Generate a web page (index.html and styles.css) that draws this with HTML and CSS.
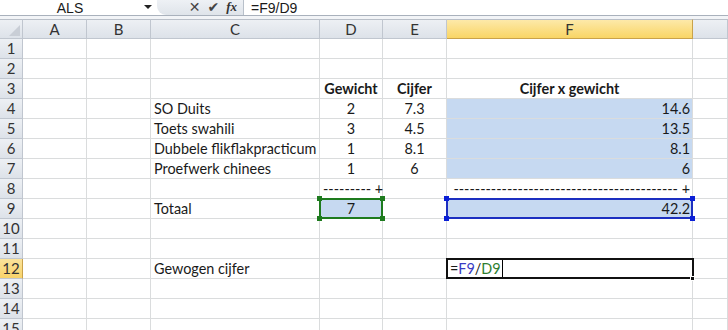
FILE: index.html
```html
<!DOCTYPE html>
<html lang="nl">
<head>
    <meta charset="UTF-8">
    <title>Gewogen cijfer</title>
    <link rel="stylesheet" href="styles.css">
</head>
<body>
    <div class="formula-bar">
        <div class="name-box">
            <span class="name">ALS</span>
            <span class="arrow"></span>
        </div>
        <div class="fx-buttons">
            <span class="btn cancel">&#x2715;</span>
            <span class="btn enter">&#x2714;</span>
            <span class="btn fx">fx</span>
        </div>
        <div class="formula-input">=F9/D9</div>
    </div>
    <div class="bar-gap"></div>

    <div class="sheet">
        <!-- kolomkoppen -->
        <div class="hdr corner"><span class="tri"></span></div>
        <div class="hdr">A</div>
        <div class="hdr">B</div>
        <div class="hdr">C</div>
        <div class="hdr">D</div>
        <div class="hdr">E</div>
        <div class="hdr active">F</div>
        <div class="hdr"></div>

        <!-- 1 -->
        <div class="rh">1</div><div class="c"></div><div class="c"></div><div class="c"></div><div class="c"></div><div class="c"></div><div class="c"></div><div class="c"></div>
        <!-- 2 -->
        <div class="rh">2</div><div class="c"></div><div class="c"></div><div class="c"></div><div class="c"></div><div class="c"></div><div class="c"></div><div class="c"></div>
        <!-- 3 -->
        <div class="rh">3</div><div class="c"></div><div class="c"></div><div class="c"></div>
        <div class="c center bold">Gewicht</div>
        <div class="c center bold">Cijfer</div>
        <div class="c center bold">Cijfer x gewicht</div>
        <div class="c"></div>
        <!-- 4 -->
        <div class="rh">4</div><div class="c"></div><div class="c"></div>
        <div class="c">SO Duits</div>
        <div class="c center">2</div>
        <div class="c center">7.3</div>
        <div class="c right sel">14.6</div>
        <div class="c"></div>
        <!-- 5 -->
        <div class="rh">5</div><div class="c"></div><div class="c"></div>
        <div class="c">Toets swahili</div>
        <div class="c center">3</div>
        <div class="c center">4.5</div>
        <div class="c right sel">13.5</div>
        <div class="c"></div>
        <!-- 6 -->
        <div class="rh">6</div><div class="c"></div><div class="c"></div>
        <div class="c">Dubbele flikflakpracticum</div>
        <div class="c center">1</div>
        <div class="c center">8.1</div>
        <div class="c right sel">8.1</div>
        <div class="c"></div>
        <!-- 7 -->
        <div class="rh">7</div><div class="c"></div><div class="c"></div>
        <div class="c">Proefwerk chinees</div>
        <div class="c center">1</div>
        <div class="c center">6</div>
        <div class="c right sel">6</div>
        <div class="c"></div>
        <!-- 8 -->
        <div class="rh">8</div><div class="c"></div><div class="c"></div><div class="c"></div>
        <div class="c right">--------- +</div>
        <div class="c"></div>
        <div class="c right">------------------------------------------ +</div>
        <div class="c"></div>
        <!-- 9 -->
        <div class="rh">9</div><div class="c"></div><div class="c"></div>
        <div class="c">Totaal</div>
        <div class="c center sel ref green">7<i class="h tl"></i><i class="h tr"></i><i class="h bl"></i><i class="h br"></i></div>
        <div class="c"></div>
        <div class="c right sel ref blue">42.2<i class="h tl"></i><i class="h tr"></i><i class="h bl"></i><i class="h br"></i></div>
        <div class="c"></div>
        <!-- 10 -->
        <div class="rh">10</div><div class="c"></div><div class="c"></div><div class="c"></div><div class="c"></div><div class="c"></div><div class="c"></div><div class="c"></div>
        <!-- 11 -->
        <div class="rh">11</div><div class="c"></div><div class="c"></div><div class="c"></div><div class="c"></div><div class="c"></div><div class="c"></div><div class="c"></div>
        <!-- 12 -->
        <div class="rh active">12</div><div class="c"></div><div class="c"></div>
        <div class="c">Gewogen cijfer</div>
        <div class="c"></div><div class="c"></div>
        <div class="c editing">=<span class="r-blue">F9</span>/<span class="r-green">D9</span><span class="caret"></span><i class="fill"></i></div>
        <div class="c"></div>
        <!-- 13 -->
        <div class="rh">13</div><div class="c"></div><div class="c"></div><div class="c"></div><div class="c"></div><div class="c"></div><div class="c"></div><div class="c"></div>
        <!-- 14 -->
        <div class="rh">14</div><div class="c"></div><div class="c"></div><div class="c"></div><div class="c"></div><div class="c"></div><div class="c"></div><div class="c"></div>
        <!-- 15 -->
        <div class="rh">15</div><div class="c"></div><div class="c"></div><div class="c"></div><div class="c"></div><div class="c"></div><div class="c"></div><div class="c"></div>
    </div>
</body>
</html>
```

FILE: styles.css
```css
:root {
    --grid-color: #dadcdd;
    --header-line: #c0c6cf;
    --sel-fill: #c6d9f1;
    --ref-blue: #1c2fc0;
    --ref-green: #1e7b1e;
    --text-color: #1a1a1a;
}

* {
    box-sizing: border-box;
    margin: 0;
    padding: 0;
}

body {
    width: 728px;
    height: 330px;
    overflow: hidden;
    background: #ffffff;
    font-family: 'Lato', 'Open Sans', sans-serif;
    font-size: 14.4px;
    color: var(--text-color);
}

/* formulebalk */
.formula-bar {
    height: 16px;
    display: flex;
    align-items: flex-start;
    border-bottom: 1px solid #a9b1bc;
    background: #ffffff;
    font-family: 'Liberation Sans', sans-serif;
    font-size: 14px;
    line-height: normal;
}

.name-box {
    width: 157px;
    height: 15px;
    display: flex;
    align-items: flex-start;
}

.name-box .name {
    width: 140px;
    text-align: center;
}

.name-box .arrow {
    width: 0;
    height: 0;
    margin-left: 4px;
    margin-top: 5px;
    border-left: 4px solid transparent;
    border-right: 4px solid transparent;
    border-top: 4px solid #222;
}

.fx-buttons {
    width: 87px;
    height: 15px;
    display: flex;
    align-items: flex-start;
    justify-content: flex-end;
    gap: 7px;
    padding-right: 6px;
    background: linear-gradient(#eef1f5, #dfe4ea);
    border-radius: 0 0 0 9px;
    border-right: 1px solid #b8c0ca;
}

.fx-buttons .btn {
    color: #444;
    font-family: 'DejaVu Sans', sans-serif;
    font-size: 14px;
    font-weight: bold;
    line-height: 14px;
}

.fx-buttons .fx {
    font-family: 'Liberation Serif', serif;
    font-style: italic;
    font-size: 13px;
    color: #333;
}

.formula-input {
    padding-left: 7px;
}

.bar-gap {
    height: 3px;
    background: #f2f4f7;
}

/* werkblad */
.sheet {
    display: grid;
    grid-template-columns: 23px 64px 64px 169px 63px 64px 246px 1fr;
    grid-auto-rows: 20px;
}

.hdr, .rh {
    background: linear-gradient(#edf0f4, #dde2e9);
    border-right: 1px solid var(--header-line);
    border-bottom: 1px solid var(--header-line);
    color: #333;
    text-align: center;
    line-height: 19px;
    font-size: 15px;
}

.hdr {
    border-top: 1px solid #b9bfc8;
    line-height: 18px;
}

.hdr.active {
    background: linear-gradient(#fde9a9, #f9d565);
    border-right-color: #c9a24a;
    border-bottom-color: #c9a24a;
}

.rh.active {
    background: linear-gradient(#fbe39b, #f8d36a);
    border-right-color: #c9a24a;
}

.corner {
    position: relative;
}

.corner .tri {
    position: absolute;
    right: 2px;
    bottom: 2px;
    width: 0;
    height: 0;
    border-left: 11px solid transparent;
    border-bottom: 11px solid #c9ced6;
}

.c {
    border-right: 1px solid var(--grid-color);
    border-bottom: 1px solid var(--grid-color);
    line-height: 20px;
    padding: 0 3px;
    white-space: nowrap;
}

.center { text-align: center; }
.right { text-align: right; padding-right: 2px; }
.bold { font-weight: bold; }

.sel {
    background: var(--sel-fill);
}

/* verwijzingen in de formule */
.ref {
    position: relative;
}

.ref::before {
    content: "";
    position: absolute;
    left: -1px;
    top: -1px;
    right: -1px;
    bottom: -1px;
    border: 2px solid;
}

.ref.green::before { border-color: var(--ref-green); }
.ref.blue::before { border-color: var(--ref-blue); }

.ref .h {
    position: absolute;
    width: 5px;
    height: 5px;
}

.ref.green .h { background: var(--ref-green); }
.ref.blue .h { background: #0a1fd6; }

.h.tl { left: -3px; top: -3px; }
.h.tr { right: -3px; top: -3px; }
.h.bl { left: -3px; bottom: -3px; }
.h.br { right: -3px; bottom: -3px; }

.editing {
    position: relative;
    padding-left: 3px;
}

.editing::before {
    content: "";
    position: absolute;
    left: -1px;
    top: -1px;
    right: -2px;
    bottom: -1px;
    border: 2px solid #111;
}

.r-blue { color: #3b3bc4; }
.r-green { color: #2f7d2f; }

.caret {
    display: inline-block;
    width: 1px;
    height: 20px;
    margin-left: 1px;
    vertical-align: top;
    background: #000;
}

.editing .fill {
    position: absolute;
    right: -3px;
    bottom: -3px;
    width: 5px;
    height: 5px;
    background: #111;
    border: 1px solid #fff;
}
```
